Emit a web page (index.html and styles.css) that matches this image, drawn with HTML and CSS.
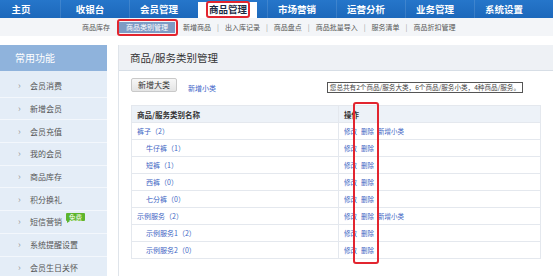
FILE: index.html
```html
<!DOCTYPE html>
<html lang="zh-CN">

<head>
  <meta charset="UTF-8">
  <title>商品/服务类别管理</title>
  <link rel="stylesheet" href="styles.css">
</head>

<body>

  <div class="topnav">
    <ul class="menu">
      <li>主页</li>
      <li>收银台</li>
      <li>会员管理</li>
      <li class="active"><span class="mark">商品管理</span></li>
      <li>市场营销</li>
      <li>运营分析</li>
      <li>业务管理</li>
      <li>系统设置</li>
    </ul>
  </div>

  <div class="subnav">
    <a href="#">商品库存</a>
    <span class="mark-sub"><a href="#" class="current">商品类别管理</a></span>
    <a href="#">新增商品</a>
    <i>|</i>
    <a href="#">出入库记录</a>
    <i>|</i>
    <a href="#">商品盘点</a>
    <i>|</i>
    <a href="#">商品批量导入</a>
    <i>|</i>
    <a href="#">服务清单</a>
    <i>|</i>
    <a href="#">商品折扣管理</a>
  </div>

  <div class="main">
    <!-- 左侧常用功能 -->
    <aside class="sidebar">
      <h3>常用功能</h3>
      <ul>
        <li>会员消费</li>
        <li>新增会员</li>
        <li>会员充值</li>
        <li>我的会员</li>
        <li>商品库存</li>
        <li>积分换礼</li>
        <li>短信营销 <span class="badge">免费</span></li>
        <li>系统提醒设置</li>
        <li>会员生日关怀</li>
      </ul>
    </aside>

    <section class="panel">
      <h2>商品/服务类别管理</h2>
      <div class="panel-body">
        <div class="toolbar">
          <button class="btn">新增大类</button>
          <a href="#" class="add-sub">新增小类</a>
          <div class="summary">您总共有2个商品/服务大类，6个商品/服务小类，4种商品/服务。</div>
        </div>

        <div class="table-box">
          <table>
            <thead>
              <tr>
                <th class="col-name">商品/服务类别名称</th>
                <th>操作</th>
              </tr>
            </thead>
            <tbody>
              <tr>
                <td><a href="#">裤子（2）</a></td>
                <td class="ops"><a href="#">修改</a><a href="#">删除</a><a href="#">新增小类</a></td>
              </tr>
              <tr class="sub">
                <td><a href="#">牛仔裤（1）</a></td>
                <td class="ops"><a href="#">修改</a><a href="#">删除</a></td>
              </tr>
              <tr class="sub">
                <td><a href="#">短裤（1）</a></td>
                <td class="ops"><a href="#">修改</a><a href="#">删除</a></td>
              </tr>
              <tr class="sub">
                <td><a href="#">西裤（0）</a></td>
                <td class="ops"><a href="#">修改</a><a href="#">删除</a></td>
              </tr>
              <tr class="sub">
                <td><a href="#">七分裤（0）</a></td>
                <td class="ops"><a href="#">修改</a><a href="#">删除</a></td>
              </tr>
              <tr>
                <td><a href="#">示例服务（2）</a></td>
                <td class="ops"><a href="#">修改</a><a href="#">删除</a><a href="#">新增小类</a></td>
              </tr>
              <tr class="sub">
                <td><a href="#">示例服务1（2）</a></td>
                <td class="ops"><a href="#">修改</a><a href="#">删除</a></td>
              </tr>
              <tr class="sub">
                <td><a href="#">示例服务2（0）</a></td>
                <td class="ops"><a href="#">修改</a><a href="#">删除</a></td>
              </tr>
            </tbody>
          </table>
          <div class="col-mark"></div>
        </div>
      </div>
    </section>
  </div>

</body>

</html>
```

FILE: styles.css
```css
body {
  margin: 0;
  width: 553px;
  overflow: hidden;
  font-family: "Noto Sans CJK SC", "Liberation Sans", sans-serif;
  background: #fff;
  color: #333;
}

a {
  text-decoration: none;
}

/* 顶部主菜单 */
.topnav {
  height: 18px;
  background: linear-gradient(#2676ca, #1c68bb);
}

.menu {
  display: flex;
  margin: 0 0 0 -9px;
  padding: 0;
  list-style: none;
}

.menu li {
  flex-shrink: 0;
  box-sizing: border-box;
  width: 59px;
  height: 18px;
  margin-right: 10px;
  display: flex;
  align-items: center;
  justify-content: center;
  border-left: 1px solid rgba(255, 255, 255, 0.12);
  color: #fff;
  font-size: 9.5px;
  font-weight: bold;
}

.menu li.active {
  background: linear-gradient(transparent 2px, #fff 2px);
  border-left-color: transparent;
  color: #1b2a44;
}

.mark {
  border: 2px solid #e2252f;
  border-radius: 3px;
  padding: 0 1px;
  line-height: 13px;
}

/* 子菜单 */
.subnav {
  height: 18px;
  display: flex;
  align-items: center;
  padding-left: 82px;
  background: #f3f5f8;
  font-size: 7px;
}

.subnav a {
  color: #555;
  line-height: 11px;
}

.subnav i {
  font-style: normal;
  color: #999;
  margin: 0 6px;
}

.mark-sub {
  display: flex;
  margin: 1px 5px 0 7px;
  padding: 1px 1px 1px 0;
  border: 2px solid #e2252f;
  border-radius: 3px;
}

.subnav a.current {
  background: #7d9bc4;
  color: #fff;
  padding: 0 7px;
}

.main {
  display: flex;
  gap: 11px;
  margin-top: 9px;
}

/* 左侧 */
.sidebar {
  flex-shrink: 0;
  width: 107px;
  min-height: 240px;
  background: #e4edf7;
}

.sidebar h3 {
  margin: 0;
  height: 26px;
  line-height: 26px;
  padding-left: 15px;
  background: #8fb3dc;
  color: #fff;
  font-size: 10px;
  font-weight: normal;
}

.sidebar ul {
  margin: 0;
  padding: 4px 0 0;
  list-style: none;
}

.sidebar li {
  box-sizing: border-box;
  height: 22.7px;
  display: flex;
  align-items: center;
  padding-left: 30px;
  border-bottom: 1px solid #f3f7fc;
  font-size: 8px;
  color: #555;
  position: relative;
}

.sidebar li::before {
  content: "›";
  position: absolute;
  left: 18px;
  color: #999;
  font-size: 9px;
}

.badge {
  position: relative;
  top: -5px;
  margin-left: 4px;
  padding: 0 3px;
  background: #5db52c;
  color: #fff;
  font-size: 6.5px;
  line-height: 8px;
  border-radius: 1px;
}

.badge::after {
  content: "";
  position: absolute;
  left: 1px;
  bottom: -2px;
  border-top: 2px solid #5db52c;
  border-right: 3px solid transparent;
}

/* 右侧内容 */
.panel {
  flex: 1;
  border-left: 1px solid #dfe4ea;
}

.panel h2 {
  margin: 0;
  height: 25px;
  line-height: 25px;
  padding-left: 11px;
  background: #eef1f5;
  border-bottom: 1px solid #d7dee6;
  font-size: 10.5px;
  font-weight: normal;
  color: #333;
}

.panel-body {
  padding: 7px 12px 0;
}

.toolbar {
  display: flex;
  align-items: flex-start;
  margin-bottom: 12px;
}

.btn {
  height: 14px;
  padding: 0 6px;
  border: 1px solid #c9c9c9;
  border-radius: 2px;
  background: linear-gradient(#f7f7f7, #e4e4e4);
  font-family: inherit;
  font-size: 8px;
  line-height: 12px;
  color: #333;
}

.add-sub {
  margin: 5px 0 0 11px;
  font-size: 7px;
  line-height: 10px;
  color: #3c64c8;
}

.summary {
  margin: 4px 18px 0 auto;
  padding: 0 2px;
  border: 1px solid #555;
  font-size: 6.6px;
  line-height: 9px;
  color: #444;
  white-space: nowrap;
}

.table-box {
  position: relative;
}

table {
  width: 100%;
  border-collapse: collapse;
  border: 1px solid #e4e8ee;
  font-size: 7px;
}

th,
td {
  height: 16px;
  padding: 0 5px;
  border-bottom: 1px solid #e4e8ee;
  text-align: left;
  white-space: nowrap;
}

th {
  background: #edf2f8;
  font-size: 7.5px;
  color: #333;
}

.col-name {
  width: 196px;
  border-right: 1px solid #e4e8ee;
}

td:first-child {
  border-right: 1px solid #e4e8ee;
}

tr.sub td:first-child {
  padding-left: 14px;
}

td a {
  color: #4166c4;
}

.ops a {
  margin-right: 4px;
  font-size: 6.5px;
}

/* 标注框 */
.col-mark {
  position: absolute;
  left: 222px;
  top: -3px;
  width: 22px;
  height: 158px;
  border: 2px solid #e2252f;
  border-radius: 3px;
}
```
